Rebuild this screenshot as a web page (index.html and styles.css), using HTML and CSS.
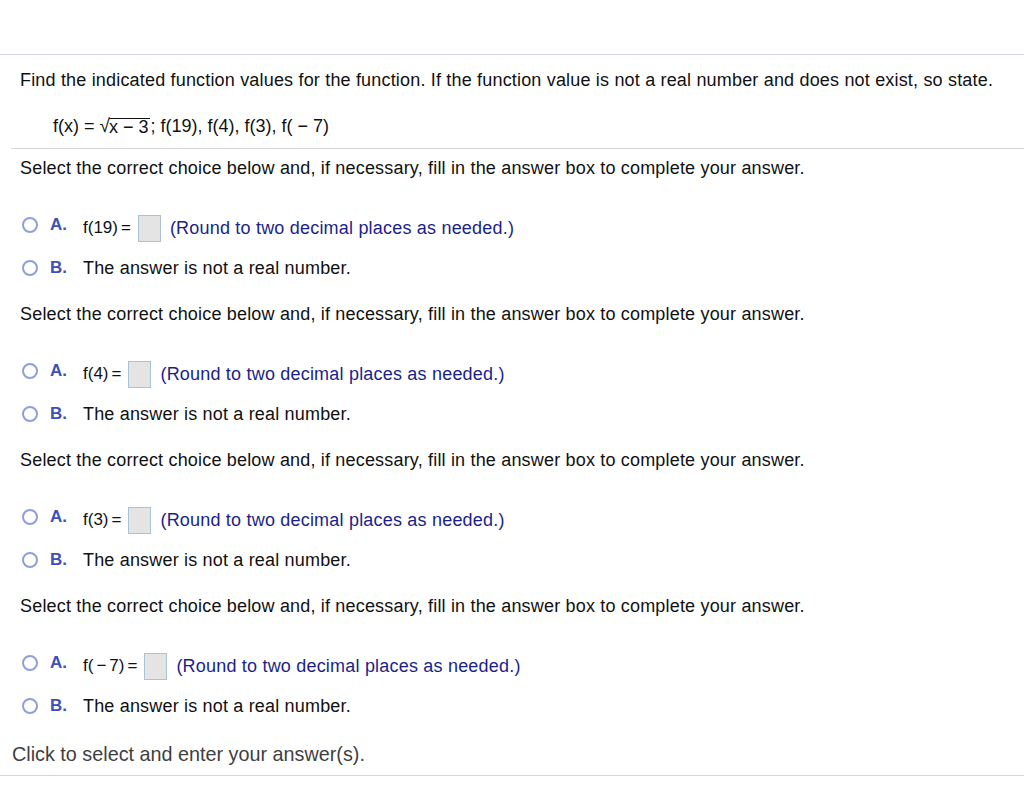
FILE: index.html
```html
<!DOCTYPE html>
<html>
<head>
<meta charset="utf-8">
<link rel="stylesheet" href="styles.css">
</head>
<body>
<div class="page">
  <div class="question">
    <p class="prompt">Find the indicated function values for the function. If the function value is not a real number and does not exist, so state.</p>
    <p class="formula">f(x)<span class="op">=</span><span class="sqrt"><span class="rad">√</span><span class="radicand">x<span class="op">−</span>3</span></span>; f(19), f(4), f(3), f(<span class="op">−</span>7)</p>
  </div>
  <div class="answers">
    <div class="part">
      <p class="instr">Select the correct choice below and, if necessary, fill in the answer box to complete your answer.</p>
      <div class="choice a">
        <span class="radio"></span><span class="letter">A.</span>
        <span class="expr">f(19)<span class="op">=</span></span><span class="box"></span><span class="hint">(Round to two decimal places as needed.)</span>
      </div>
      <div class="choice b">
        <span class="radio"></span><span class="letter">B.</span>
        <span class="text">The answer is not a real number.</span>
      </div>
    </div>
    <div class="part">
      <p class="instr">Select the correct choice below and, if necessary, fill in the answer box to complete your answer.</p>
      <div class="choice a">
        <span class="radio"></span><span class="letter">A.</span>
        <span class="expr">f(4)<span class="op">=</span></span><span class="box"></span><span class="hint">(Round to two decimal places as needed.)</span>
      </div>
      <div class="choice b">
        <span class="radio"></span><span class="letter">B.</span>
        <span class="text">The answer is not a real number.</span>
      </div>
    </div>
    <div class="part">
      <p class="instr">Select the correct choice below and, if necessary, fill in the answer box to complete your answer.</p>
      <div class="choice a">
        <span class="radio"></span><span class="letter">A.</span>
        <span class="expr">f(3)<span class="op">=</span></span><span class="box"></span><span class="hint">(Round to two decimal places as needed.)</span>
      </div>
      <div class="choice b">
        <span class="radio"></span><span class="letter">B.</span>
        <span class="text">The answer is not a real number.</span>
      </div>
    </div>
    <div class="part">
      <p class="instr">Select the correct choice below and, if necessary, fill in the answer box to complete your answer.</p>
      <div class="choice a">
        <span class="radio"></span><span class="letter">A.</span>
        <span class="expr">f(<span class="op">−</span>7)<span class="op">=</span></span><span class="box"></span><span class="hint">(Round to two decimal places as needed.)</span>
      </div>
      <div class="choice b">
        <span class="radio"></span><span class="letter">B.</span>
        <span class="text">The answer is not a real number.</span>
      </div>
    </div>
  </div>
  <div class="footer">Click to select and enter your answer(s).</div>
</div>
</body>
</html>
```

FILE: styles.css
```css
* { box-sizing: border-box; }
html, body { margin: 0; padding: 0; background: #fff; }
body {
  font-family: "Liberation Sans", Arial, sans-serif;
  color: #111;
  width: 1024px;
  height: 810px;
  overflow: hidden;
}
p { margin: 0; }
.page { padding-top: 54px; }
.question {
  border-top: 1px solid #d4d7df;
  padding: 15px 0 0 20px;
}
.prompt { font-size: 18px; line-height: 20px; letter-spacing: 0.18px; }
.formula {
  font-size: 18px;
  line-height: 20px;
  margin: 26px 0 0 33px;
  height: 32px;
}
.op { margin: 0 5px; }
.sqrt { display: inline-flex; align-items: flex-start; }
.rad { margin-right: -1px; font-size: 19px; line-height: 20px; }
.radicand { border-top: 1px solid #111; line-height: 17px; margin-top: 2px; padding-right: 2px; }
.answers {
  margin-left: 11px;
  border-top: 1px solid #d4d7df;
  padding-top: 9px;
}
.part { padding-left: 9px; height: 146px; }
.instr { font-size: 18px; line-height: 20px; letter-spacing: 0.18px; }
.choice { display: flex; align-items: center; font-size: 18px; }
.choice.a { margin-top: 35px; height: 30px; }
.choice.b { margin-top: 15px; height: 20px; }
.radio {
  width: 16px; height: 16px;
  border: 2px solid #8e9fdc;
  border-radius: 50%;
  margin-left: 2px;
  margin-right: 12px;
  flex: none;
}
.choice.a .radio { margin-top: -6px; }
.letter {
  font-weight: bold;
  color: #3e4fb7;
  width: 33px;
  font-size: 17px;
}
.choice.a .letter { margin-top: -6px; }
.expr { font-size: 17px; }
.expr .op { margin: 0 3px; }
.box {
  width: 23px; height: 27px;
  background: #e4e4e4;
  border: 1px solid #a9c3d6;
  margin: 0 9px 0 4px;
}
.hint { color: #1b1f8a; font-size: 18px; letter-spacing: 0.2px; }
.text { font-size: 18px; letter-spacing: 0.18px; }
.footer {
  margin-top: 2px;
  padding: 0 0 11px 12px;
  font-size: 19.8px;
  line-height: 20px;
  color: #3f3f3f;
  border-bottom: 1px solid #d4d7df;
}
```
